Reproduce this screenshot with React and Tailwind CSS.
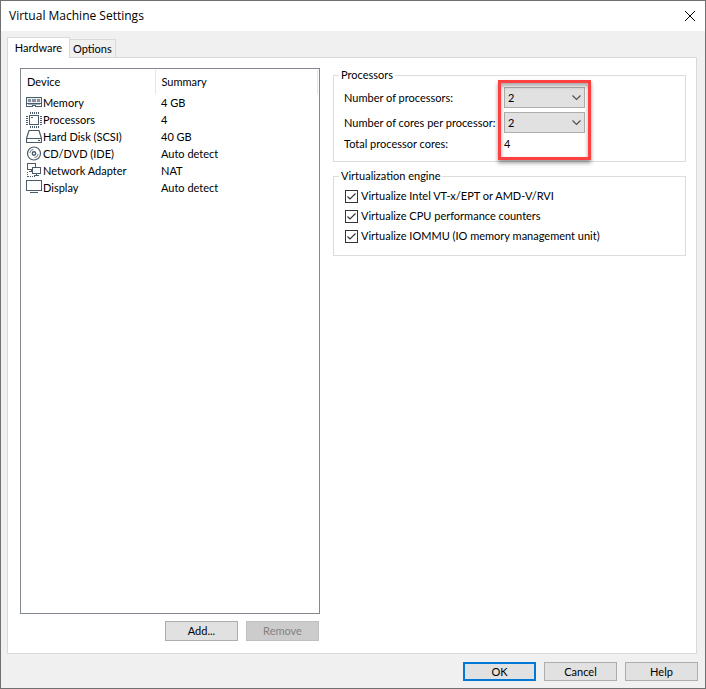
import React, { useState } from "react";

const MemoryIcon = () => (
  <svg width="16" height="16" viewBox="0 0 16 16" fill="none" stroke="#4a5c6a" shapeRendering="crispEdges">
    <path d="M0.500 2.500h15v6h-15z" fill="#eef0f2" />
    <path d="M2 4h3v3h-3zM6 4h4v3h-4zM11 4h3v3h-3z" fill="#8593a0" stroke="none" />
    <path d="M0.500 8v3.500h6v-1h3v1h6v-3.500" />
    <path d="M2 9.500h12" stroke="#a3aeb7" />
  </svg>
);

const ProcessorIcon = () => (
  <svg width="16" height="16" viewBox="0 0 16 16" fill="none" stroke="#4a5c6a" shapeRendering="crispEdges">
    <path d="M3.500 3.500h9v9h-9z" strokeWidth="1.500" />
    <path d="M5 5.500h2" />
    <path d="M4.500 0v2M6.500 0v2M8.500 0v2M10.500 0v2M12.500 0v2" />
    <path d="M4.500 14v2M6.500 14v2M8.500 14v2M10.500 14v2M12.500 14v2" />
    <path d="M0 4.500h2M0 6.500h2M0 8.500h2M0 10.500h2M0 12.500h2" />
    <path d="M14 4.500h2M14 6.500h2M14 8.500h2M14 10.500h2M14 12.500h2" />
  </svg>
);

const DiskIcon = () => (
  <svg width="16" height="16" viewBox="0 0 16 16" fill="none" stroke="#4a5c6a" strokeWidth="1.200">
    <path d="M0.500 9.500L3 1.500h10l2.500 8v4h-15zM0.500 9.500h15" />
    <path d="M12 11.500h2" />
  </svg>
);

const DiscIcon = () => (
  <svg width="16" height="16" viewBox="0 0 16 16" fill="none" stroke="#4a5c6a">
    <circle cx="8" cy="7.500" r="6.500" strokeWidth="1.200" />
    <circle cx="8" cy="7.500" r="1.700" strokeWidth="1.400" />
    <path d="M3.800 7a4.200 4.200 0 0 1 3.700-3.700M12.200 8a4.200 4.200 0 0 1-3.700 3.700" strokeWidth="0.800" />
  </svg>
);

const NetworkIcon = () => (
  <svg width="16" height="16" viewBox="0 0 16 16" fill="none" stroke="#4a5c6a" shapeRendering="crispEdges">
    <path d="M1.500 0.500h8v6h-8zM3 8.500h4M5.500 6v2" />
    <path d="M6.500 4.500h8v6h-8z" fill="#fff" />
    <path d="M8 12.500h5M10.500 10v2" />
    <path d="M1.500 9v5M2 13.500h7" strokeDasharray="1 1" />
  </svg>
);

const DisplayIcon = () => (
  <svg width="16" height="16" viewBox="0 0 16 16" fill="none" stroke="#4a5c6a" shapeRendering="crispEdges">
    <path d="M0.500 0.500h15v10h-15z" />
    <path d="M4 12.500h8" />
  </svg>
);

const devices = [
  { name: "Memory", summary: "4 GB", Icon: MemoryIcon },
  { name: "Processors", summary: "4", Icon: ProcessorIcon },
  { name: "Hard Disk (SCSI)", summary: "40 GB", Icon: DiskIcon },
  { name: "CD/DVD (IDE)", summary: "Auto detect", Icon: DiscIcon },
  { name: "Network Adapter", summary: "NAT", Icon: NetworkIcon },
  { name: "Display", summary: "Auto detect", Icon: DisplayIcon },
];

const engineOptions = [
  { id: "vtx", label: "Virtualize Intel VT-x/EPT or AMD-V/RVI" },
  { id: "counters", label: "Virtualize CPU performance counters" },
  { id: "iommu", label: "Virtualize IOMMU (IO memory management unit)" },
];

const CountSelect = ({ id, value, onChange }) => (
  <div className="relative">
    <select
      id={id}
      value={value}
      onChange={(e) => onChange(Number(e.target.value))}
      className="block h-[21px] w-full appearance-none border border-[#adadad] bg-[#e1e1e1] pl-[3px]"
    >
      <option value={1}>1</option>
      <option value={2}>2</option>
      <option value={4}>4</option>
      <option value={8}>8</option>
    </select>
    <svg className="pointer-events-none absolute top-2 right-1" width="9" height="6" viewBox="0 0 9 6" fill="none" stroke="#505050" strokeWidth="1.200">
      <path d="M0.500 0.500l4 4l4-4" />
    </svg>
  </div>
);

const CheckOption = ({ id, label }) => (
  <div className="flex h-5 items-center gap-[3px]">
    <span className="relative block size-[13px]">
      <input
        type="checkbox"
        id={id}
        defaultChecked
        className="peer block size-[13px] appearance-none border border-[#333333] bg-white"
      />
      <svg
        className="pointer-events-none absolute inset-0 hidden peer-checked:block"
        width="13"
        height="13"
        viewBox="0 0 13 13"
        fill="none"
        stroke="#333333"
        strokeWidth="1.200"
      >
        <path d="M2.500 6.500l2.500 2.500l5.500-5.500" />
      </svg>
    </span>
    <label htmlFor={id}>{label}</label>
  </div>
);

const App = () => {
  const [processors, setProcessors] = useState(2);
  const [cores, setCores] = useState(2);

  return (
    <div className="flex min-h-screen flex-col border border-[#707070] bg-[#f0f0f0] font-[Lato,sans-serif] text-[11px] leading-[14px] text-black">
      <header className="flex h-[30px] items-center justify-between bg-white pr-[9px] pl-2">
        <h1 className="font-['Open_Sans',sans-serif] text-xs">Virtual Machine Settings</h1>
        <button type="button" aria-label="Close">
          <svg width="12" height="12" viewBox="0 0 12 12" fill="none" stroke="#000">
            <path d="M1 1l10 10M11 1l-10 10" />
          </svg>
        </button>
      </header>

      <main className="flex flex-1 flex-col pt-[6px] pr-2 pb-[7px] pl-[6px]">
        <div role="tablist" className="flex items-end">
          <button
            type="button"
            role="tab"
            aria-selected="true"
            className="relative -mb-px h-[21px] min-w-[63px] border border-b-0 border-[#d9d9d9] bg-white px-[6px]"
          >
            Hardware
          </button>
          <button
            type="button"
            role="tab"
            aria-selected="false"
            className="h-[18px] min-w-[45px] border border-b-0 border-l-0 border-[#d9d9d9] px-[3px]"
          >
            Options
          </button>
        </div>

        <section className="flex flex-1 gap-[13px] border border-[#d9d9d9] bg-white pt-[10px] pr-[10px] pb-3 pl-3">
          <div className="flex w-[300px] shrink-0 flex-col gap-[7px]">
            <div className="flex-1 border border-[#828790] pt-px pr-px">
              <table className="w-full table-fixed border-collapse text-left">
                <thead>
                  <tr className="h-6">
                    <th className="w-[134px] border-r border-[#e5e5e5] pl-[6px] font-normal">Device</th>
                    <th className="border-r border-[#e5e5e5] pl-[6px] font-normal">Summary</th>
                  </tr>
                </thead>
                <tbody>
                  {devices.map(({ name, summary, Icon }) => (
                    <tr key={name} className="h-[17px]">
                      <td className="py-0 pl-[5px]">
                        <div className="flex items-center gap-px">
                          <Icon />
                          {name}
                        </div>
                      </td>
                      <td className="py-0 pl-[6px]">{summary}</td>
                    </tr>
                  ))}
                </tbody>
              </table>
            </div>
            <div className="flex justify-end gap-2 pr-px">
              <button type="button" className="h-5 w-[73px] border border-[#adadad] bg-[#e1e1e1]">
                Add...
              </button>
              <button
                type="button"
                disabled
                className="h-5 w-[73px] border border-[#bfbfbf] bg-[#cccccc] text-[#838383]"
              >
                Remove
              </button>
            </div>
          </div>

          <div className="flex min-w-0 flex-1 flex-col gap-[7px]">
            <fieldset className="border border-[#dcdcdc] px-[5px] pb-[10px]">
              <legend className="px-[2px]">Processors</legend>
              <div className="relative grid grid-cols-[160px_81px] items-center gap-y-1 pt-[5px] pl-[5px]">
                <label htmlFor="processors">Number of processors:</label>
                <CountSelect id="processors" value={processors} onChange={setProcessors} />
                <label htmlFor="cores" className="whitespace-nowrap">
                  Number of cores per processor:
                </label>
                <CountSelect id="cores" value={cores} onChange={setCores} />
                <span>Total processor cores:</span>
                <output htmlFor="processors cores">{processors * cores}</output>
                {/* highlight frame around the processor counts */}
                <div className="pointer-events-none absolute -top-[2px] -bottom-[9px] left-[159px] w-[93px] border-3 border-[#ff4040] shadow-[0_3px_4px_rgba(0,0,0,0.4),inset_0_3px_4px_rgba(0,0,0,0.35)]" />
              </div>
            </fieldset>

            <fieldset className="border border-[#dcdcdc] px-[5px] pb-[9px]">
              <legend className="px-[2px]">Virtualization engine</legend>
              <div className="pt-[3px] pl-[6px]">
                {engineOptions.map((option) => (
                  <CheckOption key={option.id} {...option} />
                ))}
              </div>
            </fieldset>
          </div>
        </section>

        <footer className="-mr-px flex justify-end gap-2 pt-2">
          <button type="button" className="h-[19px] w-[73px] border-2 border-[#0078d7] bg-[#e1e1e1] leading-none">
            OK
          </button>
          <button type="button" className="h-[19px] w-[73px] border border-[#adadad] bg-[#e1e1e1] leading-none">
            Cancel
          </button>
          <button type="button" className="h-[19px] w-[73px] border border-[#adadad] bg-[#e1e1e1] leading-none">
            Help
          </button>
        </footer>
      </main>
    </div>
  );
};

export default App;
